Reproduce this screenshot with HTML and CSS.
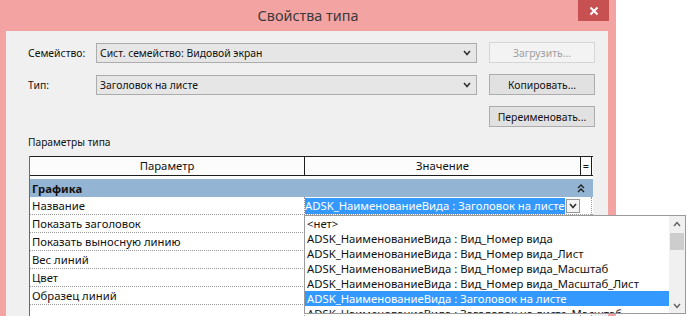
FILE: index.html
```html
<!DOCTYPE html>
<html lang="ru">
<head>
  <meta charset="UTF-8" />
  <meta name="viewport" content="width=device-width, initial-scale=1.0" />
  <title>Свойства типа</title>
  <link rel="stylesheet" href="styles.css">
</head>
<body>
  <div class="dialog">
    <div class="titlebar">
      <span class="title">Свойства типа</span>
      <button class="close">
        <svg width="10" height="10" viewBox="0 0 10 10"><path d="M1.5 1.5 L8.5 8.5 M8.5 1.5 L1.5 8.5" stroke="#fff" stroke-width="2"/></svg>
      </button>
    </div>

    <div class="content">
      <div class="form">
        <label>Семейство:</label>
        <div class="select">
          <span>Сист. семейство: Видовой экран</span>
          <svg class="chev" width="8" height="6" viewBox="0 0 8 6"><path d="M1 1 L4 4.5 L7 1" fill="none" stroke="#333" stroke-width="1.6"/></svg>
        </div>
        <button class="btn" disabled>Загрузить...</button>

        <label>Тип:</label>
        <div class="select">
          <span>Заголовок на листе</span>
          <svg class="chev" width="8" height="6" viewBox="0 0 8 6"><path d="M1 1 L4 4.5 L7 1" fill="none" stroke="#333" stroke-width="1.6"/></svg>
        </div>
        <button class="btn">Копировать...</button>

        <span></span>
        <span></span>
        <button class="btn">Переименовать...</button>
      </div>

      <div class="section-label">Параметры типа</div>

      <div class="props">
        <div class="props-head">
          <div class="hcell">Параметр</div>
          <div class="hcell">Значение</div>
          <div class="hcell eq">=</div>
        </div>

        <div class="props-body">
          <div class="group">
            <span>Графика</span>
            <svg width="8" height="9" viewBox="0 0 8 9"><path d="M1 4 L4 1 L7 4 M1 8 L4 5 L7 8" fill="none" stroke="#222" stroke-width="1.4"/></svg>
          </div>

          <div class="row">
            <div class="cell">Название</div>
            <div class="cell value editing">
              <span class="picked">ADSK_НаименованиеВида : Заголовок на листе</span>
              <span class="combo-btn">
                <svg width="8" height="6" viewBox="0 0 8 6"><path d="M1 1 L4 4.5 L7 1" fill="none" stroke="#333" stroke-width="1.6"/></svg>
              </span>

              <div class="dropdown">
                <div class="options">
                  <div class="option">&lt;нет&gt;</div>
                  <div class="option">ADSK_НаименованиеВида : Вид_Номер вида</div>
                  <div class="option">ADSK_НаименованиеВида : Вид_Номер вида_Лист</div>
                  <div class="option">ADSK_НаименованиеВида : Вид_Номер вида_Масштаб</div>
                  <div class="option">ADSK_НаименованиеВида : Вид_Номер вида_Масштаб_Лист</div>
                  <div class="option selected">ADSK_НаименованиеВида : Заголовок на листе</div>
                  <div class="option">ADSK_НаименованиеВида : Заголовок на листе_Масштаб</div>
                </div>
                <div class="scrollbar">
                  <div class="arrow">
                    <svg width="8" height="6" viewBox="0 0 8 6"><path d="M1 5 L4 1.5 L7 5" fill="none" stroke="#606060" stroke-width="1.4"/></svg>
                  </div>
                  <div class="thumb"></div>
                  <div class="track"></div>
                  <div class="arrow">
                    <svg width="8" height="6" viewBox="0 0 8 6"><path d="M1 1 L4 4.5 L7 1" fill="none" stroke="#606060" stroke-width="1.4"/></svg>
                  </div>
                </div>
              </div>
            </div>
            <div class="cell eq"></div>
          </div>

          <div class="row">
            <div class="cell">Показать заголовок</div>
            <div class="cell value"></div>
            <div class="cell eq"></div>
          </div>
          <div class="row">
            <div class="cell">Показать выносную линию</div>
            <div class="cell value"></div>
            <div class="cell eq"></div>
          </div>
          <div class="row">
            <div class="cell">Вес линий</div>
            <div class="cell value"></div>
            <div class="cell eq"></div>
          </div>
          <div class="row">
            <div class="cell">Цвет</div>
            <div class="cell value"></div>
            <div class="cell eq"></div>
          </div>
          <div class="row">
            <div class="cell">Образец линий</div>
            <div class="cell value"></div>
            <div class="cell eq"></div>
          </div>
          <div class="row">
            <div class="cell"></div>
            <div class="cell value"></div>
            <div class="cell eq"></div>
          </div>
        </div>
      </div>
    </div>
  </div>
</body>
</html>
```

FILE: styles.css
```css
body {
  margin: 0;
  background: #fff;
  font-family: 'Noto Sans', 'Open Sans', sans-serif;
  font-size: 11.3px;
  color: #111;
  overflow: hidden;
}
.dialog {
  width: 616px;
  height: 400px;
  background: #f4a3a3;
  display: flex;
  flex-direction: column;
}
.titlebar {
  height: 31px;
  display: grid;
  grid-template-columns: 1fr auto 1fr;
  align-items: start;
}
.title {
  grid-column: 2;
  font-size: 14.4px;
  color: #3a3a3a;
  line-height: 31px;
}
.close {
  grid-column: 3;
  justify-self: end;
  margin-right: 7px;
  width: 31px;
  height: 21px;
  border: none;
  padding: 0;
  background: #c75050;
  display: flex;
  align-items: center;
  justify-content: center;
}
.content {
  flex: 1;
  margin: 0 8px 0 6px;
  background: #f0f0f0;
  padding: 11px 0 0 22px;
}
.form {
  display: grid;
  grid-template-columns: 56px 381px 106px;
  grid-auto-rows: 21px;
  column-gap: 12px;
  row-gap: 11px;
  align-items: center;
  font-size: 10.4px;
}
.select {
  height: 20px;
  box-sizing: border-box;
  border: 1px solid #acacac;
  background: #e6e6e6;
  display: flex;
  align-items: center;
  justify-content: space-between;
  padding: 0 5px 0 3px;
}
.btn {
  height: 21px;
  font-family: inherit;
  font-size: 10.4px;
  color: #111;
  background: #e1e1e1;
  border: 1px solid #adadad;
  padding: 0;
}
.btn:disabled {
  background: #f3f3f3;
  border-color: #d6d6d6;
  color: #a0a0a0;
}
.section-label {
  margin-top: 8px;
  line-height: 15px;
  font-size: 10.2px;
}
.props {
  margin: 6px 0 0 1px;
  width: 563px;
  background: #fff;
  border-left: 1px solid #6a6a6a;
}
.props-head {
  display: grid;
  grid-template-columns: 275px 276px 11px;
  height: 20px;
  box-sizing: border-box;
  border-top: 1px solid #1e1e1e;
  border-bottom: 1px solid #1e1e1e;
  background: #fcfcfc;
}
.hcell {
  border-right: 1px solid #1e1e1e;
  text-align: center;
  line-height: 18px;
}
.hcell.eq {
  font-size: 11px;
}
.props-body {
  padding-top: 3px;
}
.group {
  height: 18px;
  background: #94b4d4;
  font-weight: bold;
  display: flex;
  align-items: center;
  justify-content: space-between;
  padding: 0 8px 0 2px;
}
.row {
  display: grid;
  grid-template-columns: 275px 276px 11px;
  height: 18px;
  box-sizing: border-box;
  border-bottom: 1px dotted #9a9a9a;
}
.cell {
  border-right: 1px dotted #9a9a9a;
  padding-left: 2px;
  line-height: 18px;
  white-space: nowrap;
}
.cell.value {
  padding-left: 0;
}
.editing {
  position: relative;
  display: flex;
  border-right: none;
}
.picked {
  flex: 1;
  background: #3399ff;
  color: #fff;
  height: 16px;
  line-height: 16px;
  margin-top: 1px;
}
.combo-btn {
  width: 14px;
  height: 14px;
  margin: 2px 1px 0 1px;
  box-sizing: border-box;
  border: 1px solid #9a9a9a;
  background: #f4f4f4;
  display: flex;
  align-items: center;
  justify-content: center;
}
.dropdown {
  position: absolute;
  left: -1px;
  top: 18px;
  width: 382px;
  height: 99px;
  box-sizing: border-box;
  border: 1px solid #9a9a9a;
  background: #fff;
  display: flex;
  z-index: 2;
}
.options {
  flex: 1;
  overflow: hidden;
}
.option {
  height: 15px;
  line-height: 15px;
  padding-left: 2px;
  color: #111;
}
.option.selected {
  background: #3399ff;
  color: #fff;
}
.scrollbar {
  width: 16px;
  background: #f0f0f0;
  display: flex;
  flex-direction: column;
}
.arrow {
  height: 15px;
  display: flex;
  align-items: center;
  justify-content: center;
}
.thumb {
  margin: 2px 1px 0;
  height: 17px;
  background: #cdcdcd;
}
.track {
  flex: 1;
}
```
